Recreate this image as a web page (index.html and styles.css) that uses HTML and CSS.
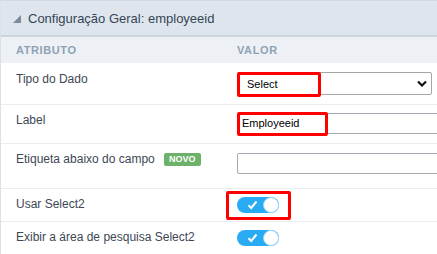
FILE: index.html
```html
<!DOCTYPE html>
<html lang="pt">
<head>
  <meta charset="UTF-8" />
  <meta name="viewport" content="width=device-width, initial-scale=1.0"/>
  <title>Configuração Geral</title>
  <link rel="stylesheet" href="styles.css">
</head>
<body>
  <div class="panel">
    <div class="panel-head">
      <svg class="caret" width="8" height="8" viewBox="0 0 8 8"><polygon points="8,0 8,8 0,8" fill="#7d8a97"/></svg>
      <span>Configuração Geral: employeeid</span>
    </div>

    <div class="cols">
      <div class="attr">Atributo</div>
      <div class="val">Valor</div>
    </div>

    <div class="row row-type">
      <div class="attr">Tipo do Dado</div>
      <div class="val">
        <div class="field">
          <div class="select">
            <span>Select</span>
            <svg width="10" height="7" viewBox="0 0 10 7"><polyline points="1,1.5 5,5.5 9,1.5" fill="none" stroke="#111" stroke-width="2.2"/></svg>
          </div>
          <span class="mark mark-select"></span>
        </div>
      </div>
    </div>

    <div class="row row-label">
      <div class="attr">Label</div>
      <div class="val">
        <div class="field">
          <div class="input">Employeeid</div>
          <span class="mark mark-input"></span>
        </div>
      </div>
    </div>

    <div class="row row-hint">
      <div class="attr">Etiqueta abaixo do campo <span class="badge">NOVO</span></div>
      <div class="val">
        <div class="input input-tall"></div>
      </div>
    </div>

    <div class="row row-switch">
      <div class="attr">Usar Select2</div>
      <div class="val">
        <div class="field">
          <div class="toggle">
            <svg class="check" width="11" height="10" viewBox="0 0 11 10"><polyline points="1.5,5.2 4.2,8 9.5,1.5" fill="none" stroke="#fff" stroke-width="2"/></svg>
            <span class="knob"></span>
          </div>
          <span class="mark mark-toggle"></span>
        </div>
      </div>
    </div>

    <div class="row row-switch">
      <div class="attr">Exibir a área de pesquisa Select2</div>
      <div class="val">
        <div class="toggle">
          <svg class="check" width="11" height="10" viewBox="0 0 11 10"><polyline points="1.5,5.2 4.2,8 9.5,1.5" fill="none" stroke="#fff" stroke-width="2"/></svg>
          <span class="knob"></span>
        </div>
      </div>
    </div>
  </div>
</body>
</html>
```

FILE: styles.css
```css
body {
  margin: 0;
  padding: 0;
  overflow: hidden;
  background: #fff;
  font-family: "Liberation Sans", Arial, sans-serif;
}

.panel {
  width: 520px;
  border-left: 1px solid #dbe1e7;
}

.panel-head {
  display: flex;
  align-items: center;
  height: 34px;
  padding-left: 12px;
  background: #dfe5ec;
  border-top: 1px solid #d2d9e0;
  border-bottom: 2px solid #cdd6df;
  font-size: 13px;
  color: #344557;
}

.caret {
  margin-right: 7px;
  margin-top: 1px;
}

.cols {
  display: flex;
  align-items: center;
  height: 26px;
  background: #edf1f5;
  font-size: 11px;
  font-weight: bold;
  letter-spacing: 0.6px;
  text-transform: uppercase;
  color: #8ea2b4;
}

.attr {
  width: 209px;
  padding-left: 15px;
}

.val {
  padding-left: 12px;
}

.row {
  display: flex;
  align-items: flex-start;
  border-bottom: 1px solid #e9edf1;
  font-size: 12px;
  color: #3d4754;
}

.row .attr,
.row .val {
  padding-top: 8px;
  line-height: 14px;
}

.row-type { height: 41px; }
.row-type .attr,
.row-type .val { padding-top: 9px; }
.row-label { height: 38px; }
.row-hint { height: 44px; }
.row-switch { height: 32px; }

.field {
  position: relative;
}

.select {
  box-sizing: border-box;
  display: flex;
  align-items: center;
  justify-content: space-between;
  width: 195px;
  height: 23px;
  padding: 0 4px 0 9px;
  border: 1px solid #a6a6a6;
  border-radius: 2px;
  font-size: 11px;
  color: #000;
}

.input {
  box-sizing: border-box;
  width: 230px;
  height: 21px;
  padding: 0 4px;
  border: 1px solid #a3aab2;
  border-radius: 2px;
  font-size: 11px;
  line-height: 19px;
  color: #000;
}

.input-tall {
  height: 21px;
  margin-top: 1px;
}

.badge {
  display: inline-block;
  margin-left: 6px;
  padding: 0 5px;
  height: 13px;
  line-height: 13px;
  background: #6cb26b;
  border-radius: 2px;
  font-size: 9px;
  font-weight: bold;
  color: #fff;
  vertical-align: 1px;
}

.toggle {
  position: relative;
  display: flex;
  align-items: center;
  width: 42px;
  height: 16px;
  border-radius: 8px;
  background: #29abf4;
}

.check {
  margin-left: 10px;
}

.knob {
  position: absolute;
  right: 0;
  top: 0;
  box-sizing: border-box;
  width: 16px;
  height: 16px;
  border-radius: 50%;
  background: #fff;
  border: 1px solid #9fd8f8;
}

.mark {
  position: absolute;
  box-sizing: border-box;
  border: 3px solid #ff0000;
  border-radius: 2px;
}

.mark-select {
  left: 0;
  top: 0;
  width: 84px;
  height: 25px;
}

.mark-input {
  left: 0;
  top: -1px;
  width: 91px;
  height: 24px;
}

.mark-toggle {
  left: -11px;
  top: -6px;
  width: 65px;
  height: 29px;
}
```
